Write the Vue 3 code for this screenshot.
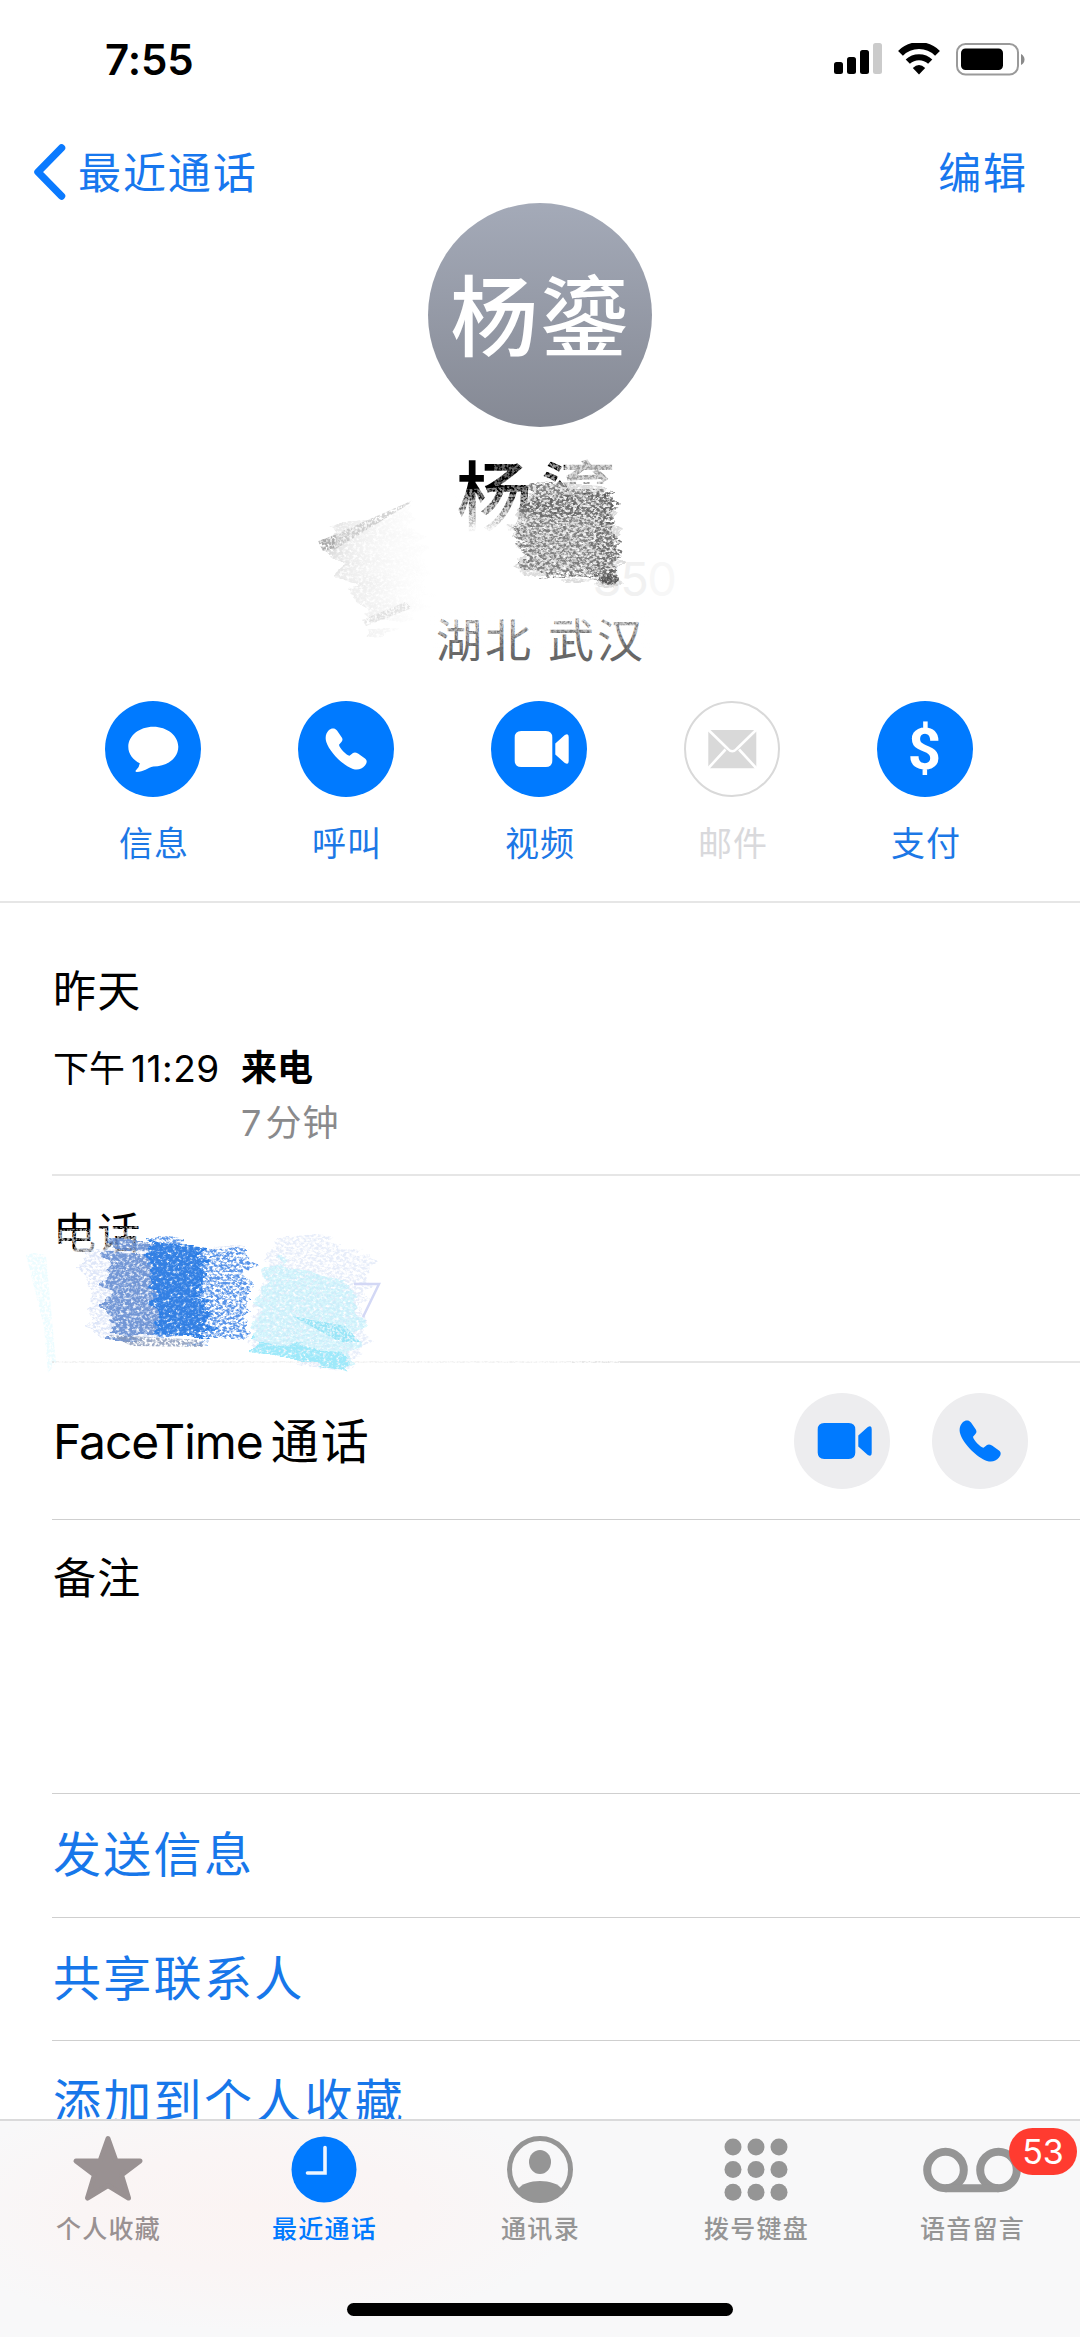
<script setup>
const actions = [
  { id: 'message', label: '信息' },
  { id: 'call', label: '呼叫' },
  { id: 'video', label: '视频' },
  { id: 'mail', label: '邮件', disabled: true },
  { id: 'pay', label: '支付' },
]
const links = ['发送信息', '共享联系人', '添加到个人收藏']
const tabs = [
  { id: 'favorites', label: '个人收藏' },
  { id: 'recents', label: '最近通话', active: true },
  { id: 'contacts', label: '通讯录' },
  { id: 'keypad', label: '拨号键盘' },
  { id: 'voicemail', label: '语音留言', badge: 53 },
]
const dots = [0, 1, 2].flatMap((r) => [0, 1, 2].map((c) => ({ x: 9 + c * 23, y: 12 + r * 22.6 })))
const phonePath =
  'M31 29C33 27 37 26.5 39 29.5L43.8 36.5C45 38.5 44.5 40 43 41.5L41 43.7C41.5 47 48 54 51.5 54.7L55 52C56.5 51 58 51.3 60 52.5L67 57.5C69.5 59.5 69 62 67 64.5C64 68 60 69.5 55 68C45 64.5 31.5 51 28.3 41C26.8 36 28 32 31 29Z'
const cameraPath =
  'M30.2 30H54.8Q61.3 30 61.3 36.5V59.5Q61.3 66 54.8 66H30.2Q23.7 66 23.7 59.5V36.5Q23.7 30 30.2 30ZM64.3 42.5L73.5 34.3Q77.7 31.5 77.7 36V60Q77.7 64.5 73.5 61.7L64.3 53.5Z'
</script>

<template>
  <div class="page">
    <header class="status">
      <span class="time">7:55</span>
      <div class="indicators">
        <svg class="signal" viewBox="0 0 48 32">
          <rect x="0" y="19" width="9" height="12" rx="2.5" />
          <rect x="13" y="14" width="9" height="17" rx="2.5" />
          <rect x="26" y="7" width="9" height="24" rx="2.5" />
          <rect x="39" y="0" width="9" height="31" rx="2.5" fill="#cbcbcb" />
        </svg>
        <svg class="wifi" viewBox="0 0 42 32">
          <path d="M2.500 10.300A26 26 0 0 1 39.500 10.300" fill="none" stroke="#000" stroke-width="6.800" />
          <path d="M9.800 18.700A16 16 0 0 1 32.200 18.700" fill="none" stroke="#000" stroke-width="6" />
          <path d="M21 31.500L14.800 25Q21 19 27.200 25Z" />
        </svg>
        <svg class="battery" viewBox="0 0 70 33">
          <rect x="1" y="1" width="61" height="30.5" rx="8.5" fill="none" stroke="#9a9a9a" stroke-width="2" />
          <rect x="5" y="5.5" width="42" height="21.5" rx="4.5" />
          <path d="M65 11Q68.5 13 68.5 16.5T65 22Z" fill="#8a8a8a" />
        </svg>
      </div>
    </header>

    <nav class="nav">
      <a class="back">
        <svg viewBox="0 0 32 56"><path d="M28 4L4.500 28L28 52" /></svg>
        <span>最近通话</span>
      </a>
      <a class="edit">编辑</a>
    </nav>

    <section class="profile">
      <div class="avatar">杨鎏</div>
      <h1 class="name">杨鎏</h1>
      <div class="number">35<span>0</span></div>
      <div class="place">湖北 武汉</div>
    </section>

    <section class="actions">
      <div v-for="a in actions" :key="a.id" class="action" :class="{ disabled: a.disabled }">
        <div class="disc">
          <span v-if="a.id === 'pay'" class="dollar">$</span>
          <svg v-else viewBox="0 0 96 96">
            <path
              v-if="a.id === 'message'"
              d="M48.300 25.700C62.200 25.700 73.300 34.500 73.300 45.700C73.300 57 62.200 65.500 48.300 65.500C43 66.500 38.500 71 31.800 71Q29.600 70.600 31.200 69Q34.200 66.500 34.800 62.200C28 59 23.300 53 23.300 45.700C23.300 34.500 34.400 25.700 48.300 25.700Z"
            />
            <path v-else-if="a.id === 'call'" :d="phonePath" />
            <path v-else-if="a.id === 'video'" :d="cameraPath" />
            <g v-else>
              <rect x="24.300" y="29" width="48" height="38.300" rx="2" />
              <path
                d="M24 28.500L43.500 47.500Q48.300 53 53.100 47.500L72.600 28.500M24 67.500L41.500 48.500M72.600 67.500L55.100 48.500"
                fill="none"
                stroke="#fff"
                stroke-width="2.600"
              />
            </g>
          </svg>
        </div>
        <span class="caption">{{ a.label }}</span>
      </div>
    </section>

    <section class="history">
      <h2>昨天</h2>
      <div class="call">
        <span class="when">下午<i>11:29</i></span>
        <div class="detail">
          <b>来电</b>
          <span class="length"><i>7</i>分钟</span>
        </div>
      </div>
    </section>

    <section class="row phone"><span>电话</span></section>

    <section class="row facetime">
      <span class="ft"><i>FaceTime</i>通话</span>
      <div class="ft-buttons">
        <svg viewBox="0 0 96 96"><path :d="cameraPath" /></svg>
        <svg viewBox="0 0 96 96"><path :d="phonePath" /></svg>
      </div>
    </section>

    <section class="row notes"><span>备注</span></section>

    <section v-for="l in links" :key="l" class="row link">{{ l }}</section>

    <!-- crayon scribbles over the private details -->
    <svg class="scribble" viewBox="0 0 1080 1400">
      <defs>
        <filter id="dense" x="-10%" y="-10%" width="120%" height="120%" color-interpolation-filters="sRGB">
          <feTurbulence type="fractalNoise" baseFrequency="0.02 0.1" numOctaves="2" seed="4" result="w" />
          <feDisplacementMap in="SourceGraphic" in2="w" scale="34" xChannelSelector="R" yChannelSelector="B" result="d" />
          <feTurbulence type="fractalNoise" baseFrequency="0.3 0.38" numOctaves="3" seed="9" />
          <feColorMatrix values="0 0 0 0 0  0 0 0 0 0  0 0 0 0 0  3.200 0 0 0 -0.750" result="n" />
          <feComposite in="d" in2="n" operator="in" />
        </filter>
        <filter id="grain" x="-10%" y="-10%" width="120%" height="120%" color-interpolation-filters="sRGB">
          <feTurbulence type="fractalNoise" baseFrequency="0.02 0.1" numOctaves="2" seed="12" result="w" />
          <feDisplacementMap in="SourceGraphic" in2="w" scale="30" xChannelSelector="R" yChannelSelector="B" result="d" />
          <feTurbulence type="fractalNoise" baseFrequency="0.3 0.4" numOctaves="3" seed="21" />
          <feColorMatrix values="0 0 0 0 0  0 0 0 0 0  0 0 0 0 0  4 0 0 0 -1.550" result="n" />
          <feComposite in="d" in2="n" operator="in" />
        </filter>
        <filter id="rub" x="-5%" y="-5%" width="110%" height="110%" color-interpolation-filters="sRGB">
          <feTurbulence type="fractalNoise" baseFrequency="0.4" numOctaves="2" seed="3" />
          <feColorMatrix values="0 0 0 0 0  0 0 0 0 0  0 0 0 0 0  4 0 0 0 -1.400" result="n" />
          <feComposite in="SourceGraphic" in2="n" operator="in" />
        </filter>
        <linearGradient id="fade" x1="0" y1="0" x2="0" y2="1">
          <stop offset="0" stop-color="#fff" stop-opacity="0.500" />
          <stop offset="1" stop-color="#fff" stop-opacity="1" />
        </linearGradient>
        <linearGradient id="lift" x1="0" y1="0" x2="0" y2="1">
          <stop offset="0" stop-color="#fff" stop-opacity="0.800" />
          <stop offset="1" stop-color="#fff" stop-opacity="0" />
        </linearGradient>
        <linearGradient id="wedge" x1="0" y1="0" x2="1" y2="0">
          <stop offset="0" stop-color="#999" stop-opacity="0.400" />
          <stop offset="0.300" stop-color="#aaa" stop-opacity="0.200" />
          <stop offset="1" stop-color="#ccc" stop-opacity="0" />
        </linearGradient>
        <linearGradient id="clear" x1="0" y1="0" x2="0" y2="1">
          <stop offset="0" stop-color="#fff" stop-opacity="0" />
          <stop offset="0.700" stop-color="#fff" stop-opacity="1" />
        </linearGradient>
      </defs>

      <path d="M545 484H650V548H535Z" fill="#fff" />
      <path d="M455 490L490 488L535 484V545H455Z" fill="url(#fade)" filter="url(#rub)" />
      <path d="M455 492H545V550H455Z" fill="url(#clear)" />
      <path d="M494 462H535V486H494Z" fill="#fff" opacity="0.400" filter="url(#rub)" />
      <path d="M540 455H570V486H540Z" fill="#fff" opacity="0.600" filter="url(#rub)" />
      <path d="M565 455H625V486H565Z" fill="#fff" opacity="0.600" />
      <path d="M565 455H625V486H565Z" fill="#fff" opacity="0.600" filter="url(#rub)" />
      <path d="M430 612H650V655H430Z" fill="url(#lift)" filter="url(#rub)" />
      <path d="M430 610H650V640H430Z" fill="url(#lift)" opacity="0.500" />

      <path d="M317 541L411 502L430 600L405 628L366 630L345 580Z" fill="url(#wedge)" filter="url(#dense)" />
      <path d="M320 541L411 501L409 504L334 550Z" fill="#aaa" opacity="0.500" filter="url(#rub)" />
      <path d="M318 541L336 535L334 548L323 551Z" fill="#aaa" filter="url(#rub)" />
      <path d="M362 620L405 602L412 608L366 626Z" fill="#bbb" opacity="0.350" filter="url(#rub)" />
      <path d="M525 485L606 488L616 494L611 508L618 560V583L521 575L516 535L526 520Z" fill="#777" filter="url(#grain)" />
      <path d="M526 496L610 498L616 518L526 512Z" fill="#555" opacity="0.800" filter="url(#grain)" />
      <path d="M594 520L610 526L616 582L598 580Z" fill="#5c5c5c" opacity="0.800" filter="url(#grain)" />
      <path d="M525 485L608 487L614 520L617 582L522 574L520 530Z" fill="#999" opacity="0.350" filter="url(#dense)" />
      <ellipse cx="609" cy="579" rx="10" ry="5" fill="#555" filter="url(#rub)" />

      <path d="M55 1230L140 1226V1258H55Z" fill="#fff" opacity="0.650" filter="url(#rub)" />
      <path d="M75 1244H140V1256H75Z" fill="#fff" opacity="0.450" />
      <path d="M54 1359H620V1364H54Z" fill="#fff" opacity="0.800" filter="url(#rub)" />
      <path d="M54 1359H570V1364H54Z" fill="#fff" opacity="0.450" />

      <path d="M26 1300L34 1298L46 1300L56 1408L48 1418L44 1372Z" transform="translate(0 -45)" fill="#e4fbff" opacity="0.700" filter="url(#rub)" />
      <path d="M78 1248L245 1244V1335L95 1338Z" fill="#6f90e0" opacity="0.220" filter="url(#grain)" />
      <path d="M105 1246H165V1336H108Z" fill="#5d87cf" filter="url(#dense)" opacity="0.850" />
      <path d="M150 1240L249 1250L250 1300L242 1342L160 1334Z" fill="#4a8ce8" opacity="0.900" filter="url(#grain)" />
      <path d="M146 1238L208 1244L202 1290L212 1336L160 1336Z" fill="#2c7ee6" filter="url(#dense)" />
      <path d="M150 1240L200 1246L196 1290L206 1334L162 1330Z" fill="#3982e2" opacity="0.550" filter="url(#dense)" />
      <path d="M108 1335L203 1340V1347L132 1346Z" fill="#8496b8" opacity="0.800" filter="url(#rub)" />

      <path d="M280 1233L368 1253L364 1345L345 1374L249 1348L262 1275Z" fill="#bccdf0" opacity="0.350" filter="url(#grain)" />
      <path d="M276 1262L350 1285L362 1335L345 1372L250 1345L262 1280Z" fill="#b4effb" opacity="0.550" filter="url(#dense)" />
      <path d="M292 1316L345 1326L360 1342L340 1342Z" fill="#93e4f7" opacity="0.900" filter="url(#rub)" />
      <path d="M251 1338L345 1350L347 1376L251 1351Z" fill="#9ee9fa" filter="url(#dense)" />
      <path d="M354 1312H379L363 1345" transform="translate(0 -28)" fill="none" stroke="#d3d8f5" stroke-width="2.500" />
    </svg>

    <footer class="tabbar">
      <div class="tabs">
        <div v-for="t in tabs" :key="t.id" class="tab" :class="[t.id, { active: t.active }]">
          <div class="glyph">
            <svg v-if="t.id === 'favorites'" width="72" height="68" viewBox="0 0 72 68">
              <path d="M36 3.500L44 26H68L49.500 40L56.500 63L36 50.500L15.500 63L22.500 40L4 26H28Z" stroke-width="5" stroke-linejoin="round" />
            </svg>
            <svg v-else-if="t.id === 'recents'" width="66" height="68" viewBox="0 0 66 68">
              <ellipse cx="33" cy="34.500" rx="32.500" ry="33" />
              <path d="M34 12.500V38H16.500" fill="none" stroke="#eef6ff" stroke-width="3.600" stroke-linecap="round" />
            </svg>
            <svg v-else-if="t.id === 'contacts'" width="66" height="68" viewBox="0 0 66 68">
              <ellipse cx="33" cy="34.500" rx="30.500" ry="31" fill="none" stroke-width="5" />
              <ellipse cx="33" cy="27" rx="11" ry="12" />
              <path d="M11 54.500C17 43 49 43 55 54.500C50 63 42 66 33 66S16 63 11 54.500Z" />
            </svg>
            <svg v-else-if="t.id === 'keypad'" width="64" height="68" viewBox="0 0 64 68">
              <circle v-for="(d, i) in dots" :key="i" :cx="d.x" :cy="d.y" r="8.500" />
            </svg>
            <svg v-else width="98" height="68" viewBox="0 0 98 68">
              <g fill="none" stroke-width="8">
                <circle cx="22.500" cy="35" r="18.300" />
                <circle cx="75.500" cy="35" r="18.300" />
                <path d="M22.500 53.300H75.500" />
              </g>
            </svg>
            <span v-if="t.badge" class="badge">{{ t.badge }}</span>
          </div>
          <span class="tab-label">{{ t.label }}</span>
        </div>
      </div>
      <div class="home"></div>
    </footer>
  </div>
</template>

<style>
body {
  background: #fff;
}
</style>

<style scoped>
.page {
  position: relative;
  width: 1080px;
  height: 2337px;
  overflow: hidden;
  display: flex;
  flex-direction: column;
  background: #fff;
  color: #000;
  font-family: Inter, 'Noto Sans CJK SC', sans-serif;
}
.page > * {
  flex: none;
  box-sizing: border-box;
}
svg {
  display: block;
}
i {
  font-style: normal;
}
.status {
  height: 119px;
  padding: 0 54px 0 105px;
  display: flex;
  justify-content: space-between;
  align-items: center;
}
.time {
  font-size: 42px;
  font-weight: 600;
  letter-spacing: -0.1px;
}
.indicators {
  display: flex;
  align-items: flex-start;
  height: 33px;
}
.signal {
  width: 48px;
  height: 32px;
  margin-right: 16px;
}
.wifi {
  width: 42px;
  height: 32px;
  margin-right: 16px;
}
.battery {
  width: 70px;
  height: 33px;
}
.nav {
  height: 84px;
  padding: 22px 52px 0 33px;
  display: flex;
  justify-content: space-between;
  align-items: center;
  color: #1777ee;
  font-size: 43px;
  letter-spacing: 1.9px;
}
.back {
  display: flex;
  align-items: center;
}
.back svg {
  width: 33px;
  height: 56px;
  margin-right: 12px;
}
.back span,
.edit {
  margin-top: -4px;
}
.back path {
  fill: none;
  stroke: #0a7aff;
  stroke-width: 7.5;
  stroke-linecap: round;
  stroke-linejoin: round;
}
.profile {
  height: 498px;
  display: flex;
  flex-direction: column;
  align-items: center;
}
.avatar {
  width: 224px;
  height: 224px;
  border-radius: 50%;
  background: linear-gradient(#a4aab8, #858994);
  color: #fff;
  font-size: 88px;
  font-weight: 500;
  line-height: 228px;
  letter-spacing: 2px;
  text-align: center;
}
.name {
  margin: 30px 0 0;
  font-size: 76px;
  font-weight: 500;
  line-height: 80px;
  letter-spacing: 8px;
}
.number {
  height: 60px;
  margin: 12px 0 2px 188px;
  font-size: 47px;
  line-height: 60px;
  letter-spacing: -1.5px;
  color: #f1f1f1;
}
.number span {
  color: #f7f7f7;
}
.place {
  font-size: 46px;
  line-height: 58px;
  letter-spacing: 3px;
  word-spacing: -2px;
  margin-left: 2px;
  color: #666;
}
.actions {
  height: 202px;
  padding: 0 56px;
  display: flex;
  border-bottom: 2px solid #e6e6e6;
}
.action {
  flex: none;
  width: 193px;
  display: flex;
  flex-direction: column;
  align-items: center;
  color: #1c78e6;
}
.disc {
  box-sizing: border-box;
  width: 96px;
  height: 96px;
  border-radius: 50%;
  background: #007aff;
  display: flex;
  align-items: center;
  justify-content: center;
}
.disc svg {
  flex: none;
  width: 96px;
  height: 96px;
  fill: #fff;
}
.dollar {
  color: #fff;
  font-family: Roboto, Inter, sans-serif;
  font-size: 58px;
  font-weight: 700;
  line-height: 96px;
}
.caption {
  margin: 22px 0 0 3px;
  font-size: 34px;
  line-height: 50px;
  letter-spacing: 1px;
}
.disabled {
  color: #d9d9dc;
}
.disabled .disc {
  background: none;
  border: 2px solid #d9d9d9;
}
.disabled svg {
  fill: #d9d9d9;
}
.history {
  height: 273px;
  margin-left: 52px;
  padding-top: 58px;
  border-bottom: 2px solid #e6e6e6;
}
.history h2 {
  margin: 0 0 0 1px;
  font-size: 43px;
  font-weight: 400;
  line-height: 60px;
  letter-spacing: 1.2px;
}
.call {
  display: flex;
  margin: 20px 0 0 1px;
  font-size: 36px;
  line-height: 55px;
}
.when {
  width: 188px;
}
.when i {
  margin-left: 6px;
  font-size: 37px;
  letter-spacing: 0.5px;
}
.detail {
  display: flex;
  flex-direction: column;
}
.detail b {
  font-weight: 600;
}
.length {
  color: #8a8a8c;
  letter-spacing: 1px;
}
.length i {
  margin-right: 3px;
}
.row {
  margin-left: 52px;
  padding-left: 1px;
  border-bottom: 1px solid #cfcfcf;
  font-size: 43px;
  letter-spacing: 1.2px;
}
.phone {
  height: 187px;
  padding-top: 27px;
  line-height: 60px;
  border-bottom: 2px solid #e6e6e6;
}
.facetime {
  height: 157px;
  display: flex;
  align-items: center;
  justify-content: space-between;
  padding-right: 52px;
  font-size: 48px;
}
.ft {
  margin-top: -7px;
  letter-spacing: 2px;
}
.ft i {
  letter-spacing: -1.1px;
  margin-right: 8px;
}
.ft-buttons {
  display: flex;
  gap: 42px;
}
.ft-buttons svg {
  width: 96px;
  height: 96px;
  border-radius: 50%;
  background: #ededef;
  fill: #007aff;
}
.notes {
  height: 274px;
  padding-top: 28px;
  line-height: 60px;
}
.link {
  height: 123.500px;
  line-height: 122px;
  font-size: 48px;
  letter-spacing: 2.3px;
  color: #1777ea;
}
.scribble {
  position: absolute;
  left: 0;
  top: 0;
  width: 1080px;
  height: 1400px;
}
.tabbar {
  position: absolute;
  left: 0;
  bottom: 0;
  width: 1080px;
  height: 218px;
  border-top: 2px solid #dadadb;
  background: radial-gradient(ellipse 330px 120px at 250px 90px, #fbf4f3, #faf5f5 50%, rgba(248, 248, 249, 0)), #f8f8f9;
}
.tabs {
  display: flex;
}
.tab {
  width: 216px;
  display: flex;
  flex-direction: column;
  align-items: center;
  color: #959595;
}
.tab.favorites {
  color: #999192;
}
.tab.active {
  color: #007aff;
}
.glyph {
  position: relative;
  height: 68px;
  margin-top: 14px;
  fill: currentColor;
  stroke: none;
}
.favorites svg,
.contacts ellipse:first-child,
.voicemail g {
  stroke: currentColor;
}
.badge {
  position: absolute;
  left: 86px;
  top: -7px;
  width: 68px;
  height: 47px;
  border-radius: 24px;
  background: #ff3b30;
  color: #fff;
  font-size: 34px;
  line-height: 47px;
  text-align: center;
}
.tab-label {
  margin: 8px 0 0 1px;
  font-size: 25px;
  font-weight: 500;
  line-height: 36px;
  letter-spacing: 1.3px;
}
.home {
  width: 386px;
  height: 13px;
  margin: 56px auto 0;
  border-radius: 7px;
  background: #000;
}
</style>
